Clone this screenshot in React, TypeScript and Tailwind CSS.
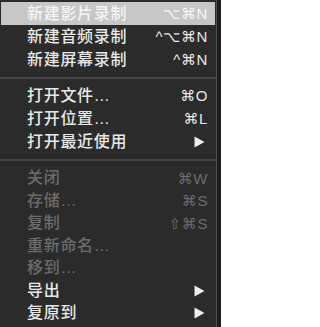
type Item = {
  label: string;
  shortcut?: string;
  submenu?: boolean;
  disabled?: boolean;
  active?: boolean;
};

const groups: { items: Item[]; rowH: string }[] = [
  {
    rowH: "h-[23px]",
    items: [
      { label: "新建影片录制", shortcut: "⌥⌘N", active: true },
      { label: "新建音频录制", shortcut: "^⌥⌘N" },
      { label: "新建屏幕录制", shortcut: "^⌘N" },
    ],
  },
  {
    rowH: "h-[23px]",
    items: [
      { label: "打开文件…", shortcut: "⌘O" },
      { label: "打开位置…", shortcut: "⌘L" },
      { label: "打开最近使用", submenu: true },
    ],
  },
  {
    rowH: "h-[22.5px]",
    items: [
      { label: "关闭", shortcut: "⌘W", disabled: true },
      { label: "存储…", shortcut: "⌘S", disabled: true },
      { label: "复制", shortcut: "⇧⌘S", disabled: true },
      { label: "重新命名…", disabled: true },
      { label: "移到…", disabled: true },
      { label: "导出", submenu: true },
      { label: "复原到", submenu: true },
    ],
  },
];

function Arrow() {
  return (
    <svg width="11" height="12" viewBox="0 0 11 12" className="mr-[3px]">
      <polygon points="0.5,0.5 10.5,6 0.5,11.5" fill="#ececec" />
    </svg>
  );
}

function Row({ item, rowH }: { item: Item; rowH: string }) {
  const color = item.active
    ? "text-[#f6f6f6]"
    : item.disabled
      ? "text-[#6c6c6c]"
      : "text-[#e8e8e8]";
  return (
    <div
      className={`flex items-center justify-between pl-[26px] pr-[7px] ${rowH} ${color} ${
        item.active ? "bg-[#c7c7c7]" : ""
      }`}
    >
      <span className="text-[16px] font-medium tracking-[0.7px] leading-none">{item.label}</span>
      {item.shortcut && (
        <span className="text-[15px] tracking-[0.6px] leading-none">{item.shortcut}</span>
      )}
      {item.submenu && <Arrow />}
    </div>
  );
}

export default function App() {
  return (
    <div
      className="w-[221px] h-[327px] bg-[#1e1e1e] overflow-hidden"
      style={{ fontFamily: '"Liberation Sans", "DejaVu Sans", "Noto Sans CJK SC", sans-serif' }}
    >
      <div className="w-[217px] h-full bg-[#2b2b2b] border-r border-[#4e4e4e] pt-[2px]">
        {groups.map((g, gi) => (
          <div key={gi}>
            {gi > 0 && (
              <div className={`flex items-center ${gi === 1 ? "h-[13px]" : "h-[14px]"}`}>
                <div className="w-full h-[2px] bg-[#464646]" />
              </div>
            )}
            <div className="px-[1px]">
              {g.items.map((item) => (
                <Row key={item.label} item={item} rowH={g.rowH} />
              ))}
            </div>
          </div>
        ))}
      </div>
    </div>
  );
}
